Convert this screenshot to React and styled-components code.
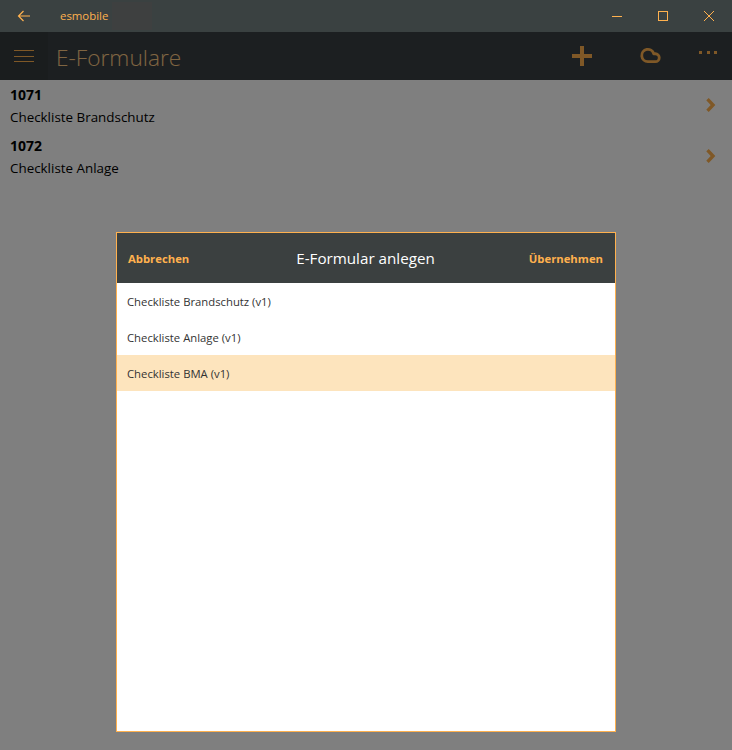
import React from "react";
import styled, { createGlobalStyle } from "styled-components";
import { Cloud } from "lucide-react";

const accent = "#ffb14e";

const GlobalStyle = createGlobalStyle`
  html, body {
    margin: 0;
    padding: 0;
    height: 100%;
    overflow: hidden;
    background: #fff;
    font-family: "Open Sans", "Noto Sans", sans-serif;
  }
`;

const Window = styled.div`
  width: 732px;
  height: 750px;
  display: flex;
  flex-direction: column;
`;

const TitleBar = styled.div`
  height: 32px;
  flex: none;
  display: flex;
  align-items: center;
  background: #3a4141;
  color: ${accent};
`;

const BackButton = styled.div`
  width: 48px;
  height: 32px;
  display: flex;
  align-items: center;
  justify-content: center;
`;

const AppName = styled.div`
  margin: -2px 0 0 12px;
  font-size: 11.4px;
  width: 50px;
`;

const Smudge = styled.div`
  width: 40px;
  height: 28px;
  margin-left: 2px;
  background: #3e4040;
`;

const WindowButtons = styled.div`
  margin-left: auto;
  display: flex;
`;

const WindowButton = styled.div`
  width: 46px;
  height: 32px;
  display: flex;
  align-items: center;
  justify-content: center;
`;

const Content = styled.div`
  position: relative;
  flex: 1;
  display: flex;
  flex-direction: column;
`;

const AppBar = styled.div`
  height: 48px;
  flex: none;
  display: flex;
  align-items: center;
  background: #383f42;
  color: ${accent};
`;

const MenuButton = styled.div`
  width: 48px;
  height: 48px;
  display: flex;
  flex-direction: column;
  align-items: center;
  justify-content: center;
  gap: 4.5px;
  background: #353b3c;
`;

const MenuLine = styled.span`
  width: 20px;
  height: 1px;
  background: ${accent};
`;

const PageTitle = styled.div`
  margin: 2px 0 0 8px;
  font-size: 22.7px;
  font-weight: 300;
  color: #ffcb85;
`;

const AppActions = styled.div`
  margin-left: auto;
  display: flex;
  align-items: center;
`;

const ActionButton = styled.div`
  width: 68px;
  height: 48px;
  display: flex;
  align-items: center;
  justify-content: center;
`;

const CloudButton = styled(ActionButton)`
  padding-bottom: 2px;
  box-sizing: border-box;
`;

const MoreButton = styled.div`
  width: 48px;
  height: 48px;
  display: flex;
  justify-content: center;
  gap: 4.5px;
  padding-top: 19px;
  box-sizing: border-box;
`;

const MoreDot = styled.span`
  width: 3px;
  height: 3px;
  background: ${accent};
`;

const List = styled.div`
  display: flex;
  flex-direction: column;
`;

const Row = styled.div`
  height: 51px;
  padding: 5px 16px 0 10px;
  box-sizing: border-box;
  display: flex;
  justify-content: space-between;
  color: #000;
`;

const RowText = styled.div`
  display: flex;
  flex-direction: column;
  gap: 4px;
`;

const RowNumber = styled.div`
  font-size: 14px;
  font-weight: 700;
  line-height: 19px;
`;

const RowLabel = styled.div`
  font-size: 13.4px;
  line-height: 19px;
`;

const RowArrow = styled.div`
  display: flex;
  align-items: center;
  height: 30px;
  margin-top: 5px;
`;

const Overlay = styled.div`
  position: absolute;
  inset: 0;
  background: rgba(0, 0, 0, 0.5);
  display: flex;
  align-items: flex-start;
  justify-content: center;
  padding-top: 200px;
`;

const Dialog = styled.div`
  width: 500px;
  height: 500px;
  box-sizing: border-box;
  border: 1px solid ${accent};
  background: #fff;
  display: flex;
  flex-direction: column;
`;

const DialogHeader = styled.div`
  height: 50px;
  flex: none;
  display: grid;
  grid-template-columns: 1fr auto 1fr;
  align-items: center;
  padding: 0 12px 0 11px;
  background: #3b4040;
`;

const DialogAction = styled.div`
  font-size: 11.3px;
  font-weight: 700;
  color: ${accent};
  text-align: ${(props) => (props.$end ? "right" : "left")};
`;

const DialogTitle = styled.div`
  font-size: 15.2px;
  color: #fff;
`;

const Option = styled.div`
  height: 36px;
  flex: none;
  display: flex;
  align-items: center;
  padding-left: 10px;
  font-size: 11.3px;
  color: #333;
  background: ${(props) => (props.$selected ? "#fde4bd" : "#fff")};
`;

const forms = [
  { id: "1071", name: "Checkliste Brandschutz" },
  { id: "1072", name: "Checkliste Anlage" },
];

const options = ["Checkliste Brandschutz (v1)", "Checkliste Anlage (v1)", "Checkliste BMA (v1)"];

export default function App() {
  return (
    <Window>
      <GlobalStyle />
      <TitleBar>
        <BackButton>
          <svg width="14" height="12" viewBox="0 0 14 12" fill="none">
            <path d="M13 6H1.5M6.5 1L1.5 6l5 5" stroke={accent} strokeWidth="1.2" />
          </svg>
        </BackButton>
        <AppName>esmobile</AppName>
        <Smudge />
        <WindowButtons>
          <WindowButton>
            <svg width="10" height="10" viewBox="0 0 10 10">
              <path d="M0 5.5h10" stroke={accent} strokeWidth="1" />
            </svg>
          </WindowButton>
          <WindowButton>
            <svg width="10" height="10" viewBox="0 0 10 10">
              <rect x="0.5" y="0.5" width="9" height="9" fill="none" stroke={accent} strokeWidth="1" />
            </svg>
          </WindowButton>
          <WindowButton>
            <svg width="10" height="10" viewBox="0 0 10 10">
              <path d="M0 0l10 10M10 0L0 10" stroke={accent} strokeWidth="1" />
            </svg>
          </WindowButton>
        </WindowButtons>
      </TitleBar>
      <Content>
        <AppBar>
          <MenuButton>
            <MenuLine />
            <MenuLine />
            <MenuLine />
          </MenuButton>
          <PageTitle>E-Formulare</PageTitle>
          <AppActions>
            <ActionButton>
              <svg width="20" height="20" viewBox="0 0 20 20">
                <path d="M10 0v20M0 10h20" stroke={accent} strokeWidth="4" />
              </svg>
            </ActionButton>
            <CloudButton>
              <Cloud size={21} strokeWidth={2.8} absoluteStrokeWidth />
            </CloudButton>
            <MoreButton>
              <MoreDot />
              <MoreDot />
              <MoreDot />
            </MoreButton>
          </AppActions>
        </AppBar>
        <List>
          {forms.map((form) => (
            <Row key={form.id}>
              <RowText>
                <RowNumber>{form.id}</RowNumber>
                <RowLabel>{form.name}</RowLabel>
              </RowText>
              <RowArrow>
                <svg width="10" height="14" viewBox="0 0 10 14" fill="none">
                  <path d="M1.5 1.2L7 7l-5.5 5.8" stroke={accent} strokeWidth="3.4" />
                </svg>
              </RowArrow>
            </Row>
          ))}
        </List>
        <Overlay>
          <Dialog>
            <DialogHeader>
              <DialogAction>Abbrechen</DialogAction>
              <DialogTitle>E-Formular anlegen</DialogTitle>
              <DialogAction $end>Übernehmen</DialogAction>
            </DialogHeader>
            {options.map((option, i) => (
              <Option key={option} $selected={i === 2}>
                {option}
              </Option>
            ))}
          </Dialog>
        </Overlay>
      </Content>
    </Window>
  );
}
